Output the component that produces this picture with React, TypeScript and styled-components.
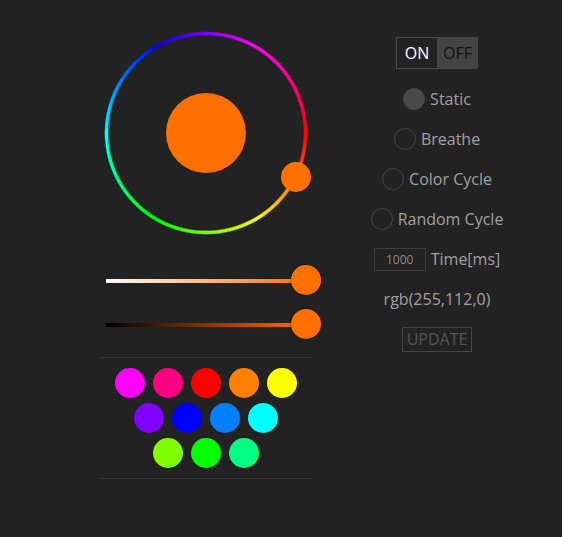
import React from "react";
import styled, { createGlobalStyle } from "styled-components";

const Global = createGlobalStyle`
  html, body { margin: 0; padding: 0; background: #222222; }
  body { font-family: "Open Sans", "DejaVu Sans", sans-serif; color: #a0a0a0; }
`;

const Page = styled.div`
  display: flex;
  align-items: flex-start;
  padding-left: 100px;
  min-height: 537px;
  box-sizing: border-box;
`;

const LeftCol = styled.div`
  width: 212px;
  display: flex;
  flex-direction: column;
  align-items: center;
  padding-top: 31px;
`;

const Wheel = styled.div`
  position: relative;
  width: 204px;
  height: 204px;
  display: flex;
  align-items: center;
  justify-content: center;
`;

const Ring = styled.div`
  position: absolute;
  inset: 0;
  border-radius: 50%;
  background: conic-gradient(from 90deg, #ff0000, #ffff00, #00ff00, #00ffff, #0000ff, #ff00ff, #ff0000);
  -webkit-mask: radial-gradient(farthest-side, transparent calc(100% - 5px), #000 calc(100% - 3.5px), #000 calc(100% - 1.5px), transparent 100%);
  mask: radial-gradient(farthest-side, transparent calc(100% - 5px), #000 calc(100% - 3.5px), #000 calc(100% - 1.5px), transparent 100%);
  filter: blur(0.4px);
`;

const Preview = styled.div<{ $c: string }>`
  width: 80px;
  height: 80px;
  border-radius: 50%;
  background: ${(p) => p.$c};
`;

const WheelHandle = styled.div<{ $c: string }>`
  position: absolute;
  width: 30px;
  height: 30px;
  border-radius: 50%;
  background: ${(p) => p.$c};
  transform: translate(-50%, -50%);
`;

const Sliders = styled.div`
  margin-top: 30px;
  width: 200px;
  display: flex;
  flex-direction: column;
  gap: 14px;
`;

const SliderRow = styled.div`
  position: relative;
  height: 30px;
  display: flex;
  align-items: center;
`;

const Track = styled.div<{ $from: string; $to: string; $dy: number }>`
  width: 200px;
  height: 4px;
  margin-top: ${(p) => p.$dy}px;
  background: linear-gradient(to right, ${(p) => p.$from}, ${(p) => p.$to});
`;

const Knob = styled.div<{ $c: string }>`
  position: absolute;
  right: -15px;
  top: 0;
  width: 30px;
  height: 30px;
  border-radius: 50%;
  background: ${(p) => p.$c};
  box-shadow: 0 0 3px rgba(0, 0, 0, 0.5);
`;

const Palette = styled.div`
  margin-top: 18px;
  width: 212px;
  border-top: 1px solid #353535;
  border-bottom: 1px solid #353535;
  padding: 10px 0 10px;
  display: flex;
  flex-direction: column;
  align-items: center;
  gap: 5px;
`;

const SwatchRow = styled.div`
  display: flex;
  gap: 8px;
`;

const Swatch = styled.div<{ $c: string }>`
  width: 30px;
  height: 30px;
  border-radius: 50%;
  background: ${(p) => p.$c};
`;

const RightCol = styled.div`
  margin-left: 50px;
  width: 150px;
  padding-top: 37px;
  display: flex;
  flex-direction: column;
  align-items: center;
`;

const Toggle = styled.div`
  display: flex;
  height: 32px;
  margin-bottom: 10px;
`;

const ToggleSeg = styled.div<{ $on: boolean }>`
  width: 41px;
  box-sizing: border-box;
  display: flex;
  align-items: center;
  justify-content: center;
  font-size: 16px;
  color: ${(p) => (p.$on ? "#ffffff" : "#111111")};
  background: ${(p) => (p.$on ? "#222222" : "#444444")};
  border: 1px solid ${(p) => (p.$on ? "#4a4a4a" : "#444444")};
  border-right: ${(p) => (p.$on ? "none" : "1px solid #444444")};
`;

const Row = styled.div`
  height: 40px;
  display: flex;
  align-items: center;
  justify-content: center;
  gap: 5px;
  font-size: 16px;
  color: #a0a0a0;
  white-space: nowrap;
`;

const Radio = styled.div<{ $checked: boolean }>`
  width: 22px;
  height: 22px;
  box-sizing: border-box;
  border-radius: 50%;
  border: 1px solid ${(p) => (p.$checked ? "#484848" : "#444444")};
  background: ${(p) => (p.$checked ? "#484848" : "transparent")};
`;

const TimeInput = styled.div`
  width: 52px;
  height: 23px;
  box-sizing: border-box;
  border: 1px solid #3c3c3c;
  display: flex;
  align-items: center;
  justify-content: center;
  font-size: 12px;
  color: #8a8a8a;
`;

const UpdateButton = styled.div`
  width: 70px;
  height: 25px;
  box-sizing: border-box;
  border: 1px solid #444444;
  display: flex;
  align-items: center;
  justify-content: center;
  font-size: 16px;
  color: #555555;
`;

const swatchRows = [
  ["#ff00ff", "#ff0080", "#ff0000", "#ff8000", "#ffff00"],
  ["#8000ff", "#0000ff", "#0080ff", "#00ffff"],
  ["#80ff00", "#00ff00", "#00ff80"],
];

const modes = ["Static", "Breathe", "Color Cycle", "Random Cycle"];

export default function App() {
  const color = "rgb(255,112,0)";
  const hue = 26.35;
  const r = 100;
  const hx = 102 + r * Math.cos((hue * Math.PI) / 180);
  const hy = 102 + r * Math.sin((hue * Math.PI) / 180);
  return (
    <>
      <Global />
      <Page>
        <LeftCol>
          <Wheel>
            <Ring />
            <Preview $c={color} />
            <WheelHandle $c={color} style={{ left: hx, top: hy }} />
          </Wheel>
          <Sliders>
            <SliderRow>
              <Track $from="#ffffff" $to={color} $dy={2} />
              <Knob $c={color} />
            </SliderRow>
            <SliderRow>
              <Track $from="#000000" $to={color} $dy={2} />
              <Knob $c={color} />
            </SliderRow>
          </Sliders>
          <Palette>
            {swatchRows.map((row, i) => (
              <SwatchRow key={i}>
                {row.map((c) => (
                  <Swatch key={c} $c={c} />
                ))}
              </SwatchRow>
            ))}
          </Palette>
        </LeftCol>
        <RightCol>
          <Toggle>
            <ToggleSeg $on>ON</ToggleSeg>
            <ToggleSeg $on={false}>OFF</ToggleSeg>
          </Toggle>
          {modes.map((m, i) => (
            <Row key={m}>
              <Radio $checked={i === 0} />
              {m}
            </Row>
          ))}
          <Row>
            <TimeInput>1000</TimeInput>
            Time[ms]
          </Row>
          <Row>rgb(255,112,0)</Row>
          <Row>
            <UpdateButton>UPDATE</UpdateButton>
          </Row>
        </RightCol>
      </Page>
    </>
  );
}
